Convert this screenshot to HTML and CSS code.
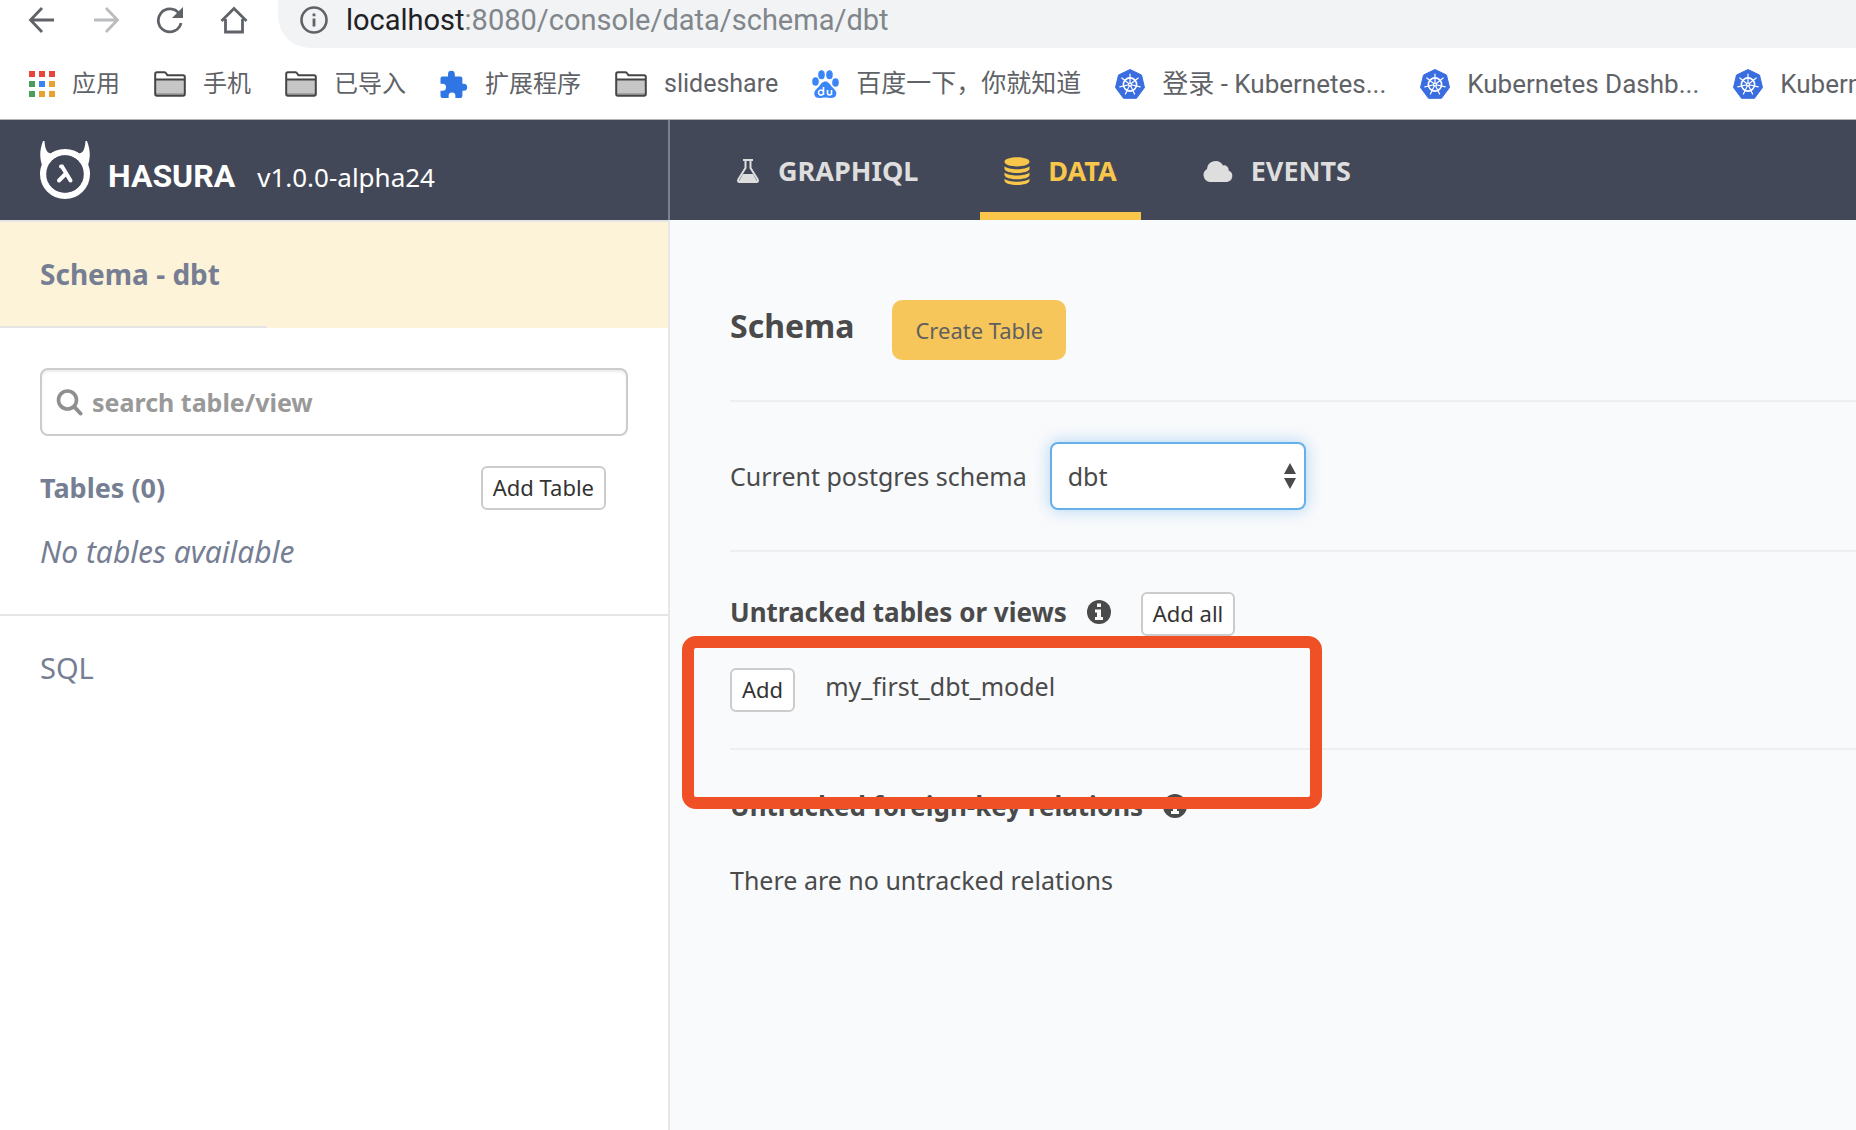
FILE: index.html
```html
<!DOCTYPE html>
<html lang="zh-CN">
<head>
<meta charset="utf-8">
<title>Schema - dbt | Hasura</title>
<meta name="viewport" content="width=device-width, initial-scale=1">
<link rel="stylesheet" href="styles.css">
</head>
<body>
<svg class="sprite" aria-hidden="true">
  <symbol id="folder" viewBox="0 0 32 26">
    <path d="M1.2 3q0-1.8 1.8-1.8h7.2q1 0 1.6.8l1.6 2.2h15.600q1.800 0 1.800 1.800v17q0 1.800-1.800 1.800H3q-1.800 0-1.800-1.800z" fill="#fff"/>
    <path d="M2 9h28v15H2z" fill="#c6c6c6"/><path d="M2 22h28v2H2z" fill="#a3a3a3"/>
    <path d="M1.200 3q0-1.800 1.800-1.800h7.200q1 0 1.600.8l1.600 2.200h15.600q1.800 0 1.800 1.800v17q0 1.800-1.800 1.800H3q-1.800 0-1.800-1.800zM1 8.600h30" fill="none" stroke="#454545" stroke-width="2"/>
  </symbol>
  <symbol id="kube" viewBox="0 0 30 30">
    <path d="M15 0.500 26.500 6 29.500 18.500 21.500 29.300H8.500L.5 18.500 3.500 6z" fill="#3a6de0" stroke="#3a6de0" stroke-linejoin="round"/>
    <g fill="none" stroke="#fff" stroke-linecap="round"><circle cx="15" cy="15.500" r="6.600" stroke-width="1.600"/>
    <path stroke-width="1.200" d="M15 15.500V5M15 15.500l8.200-6.500M15 15.500l10.200 2.300M15 15.500l4.600 9.500M15 15.500l-4.600 9.500M15 15.500l-10.200 2.300M15 15.500 6.800 9"/></g>
    <circle cx="15" cy="15.500" r="2" fill="#fff"/><circle cx="15" cy="15.500" r=".8" fill="#3a6de0"/>
  </symbol>
  <symbol id="info" viewBox="0 0 24 24">
    <circle cx="12" cy="12" r="12" fill="#4a4a4a"/>
    <path d="M10 3.500h4v3.500h-4zM8 9.500h6v7.500h2v3H8v-3h2v-4.500H8z" fill="#f9fafc"/>
  </symbol>
</svg>

<header class="browser">
  <div class="toolbar">
    <button class="tool" aria-label="Back"><svg width="28" height="28" viewBox="0 0 28 28"><path d="M26 14H3M14 2 2.500 14 14 26" fill="none" stroke="#5f6368" stroke-width="2.800"/></svg></button>
    <button class="tool" aria-label="Forward"><svg width="28" height="28" viewBox="0 0 28 28"><path d="M2 14h23M14 2l11.500 12L14 26" fill="none" stroke="#babcbe" stroke-width="2.800"/></svg></button>
    <button class="tool" aria-label="Reload"><svg width="28" height="28" viewBox="0 0 28 28"><path d="M23 7.500A11.500 11.500 0 1 0 25 17" fill="none" stroke="#5f6368" stroke-width="2.800"/><path d="M27 1v11H16z" fill="#5f6368"/></svg></button>
    <button class="tool" aria-label="Home"><svg width="28" height="28" viewBox="0 0 28 28"><path d="M1.500 15 14 2.500 26.500 15M5.500 13v13h17V13" fill="none" stroke="#5f6368" stroke-width="2.800"/></svg></button>
    <div class="address">
      <svg width="28" height="28" viewBox="0 0 28 28"><circle cx="14" cy="14" r="12.500" fill="none" stroke="#5f6368" stroke-width="2.600"/><path d="M12.600 7.500h2.800v2.800h-2.800zM12.600 12.500h2.800v8h-2.800z" fill="#5f6368"/></svg>
      <span class="url"><b>localhost</b>:8080/console/data/schema/dbt</span>
    </div>
  </div>
  <nav class="bookmarks" aria-label="Bookmarks">
    <a href="#"><svg width="26" height="26" viewBox="0 0 26 26"><path d="M0 0h6v6H0zM10 0h6v6h-6zM20 0h6v6h-6z" fill="#e8453c"/><path d="M0 10h6v6H0zM0 20h6v6H0z" fill="#4a9d5b"/><path d="M10 10h6v6h-6z" fill="#3b83f1"/><path d="M20 10h6v6h-6zM10 20h6v6h-6zM20 20h6v6h-6z" fill="#e8a234"/></svg>应用</a>
    <a href="#"><svg width="32" height="26"><use href="#folder"/></svg>手机</a>
    <a href="#"><svg width="32" height="26"><use href="#folder"/></svg>已导入</a>
    <a href="#"><svg width="28" height="28" viewBox="0 0 28 28"><path d="M2.500 6.500H8V4.200a3.400 3.400 0 0 1 6.800 0V6.500h5.600q2 0 2 2v5.300h1.300a3.500 3.500 0 0 1 0 7h-1.300V26q0 2-2 2h-5v-2a3.400 3.400 0 0 0-6.800 0v2H2.500q-2 0-2-2v-5.200h2a3.500 3.500 0 0 0 0-7h-2V8.500q0-2 2-2z" fill="#2f75e4"/></svg>扩展程序</a>
    <a href="#" class="page"><svg width="32" height="26"><use href="#folder"/></svg>slideshare</a>
    <a href="#" class="page"><svg width="27" height="28" viewBox="0 0 27 28"><g fill="#3b86f7"><ellipse cx="3.500" cy="11.500" rx="3.300" ry="4.300"/><ellipse cx="9.500" cy="4.800" rx="3.300" ry="4.500"/><ellipse cx="17.500" cy="4.800" rx="3.300" ry="4.500"/><ellipse cx="23.500" cy="12.500" rx="3.300" ry="4.300"/><path d="M13.300 11.500c3 0 4.500 2.500 6 4.500 2 2.500 5.400 4.500 5 8-.4 3-2.800 4-5.300 4-2 0-3.500-.6-5.700-.6s-3.700.6-5.700.6c-3 0-5-1-5.300-4-.3-3.500 3-5.500 5-8 1.500-2 3-4.500 6-4.500z"/></g><path d="M11.500 17v8M11.500 22.500a2.500 2.500 0 1 0 0 .1M15.500 20v3q0 2 2 2t2-2v-3V25" fill="none" stroke="#fff" stroke-width="1.600"/></svg>百度一下，你就知道</a>
    <a href="#" class="cluster"><svg width="30" height="30"><use href="#kube"/></svg>登录 - Kubernetes...</a>
    <a href="#" class="cluster"><svg width="30" height="30"><use href="#kube"/></svg>Kubernetes Dashb...</a>
    <a href="#" class="cluster"><svg width="30" height="30"><use href="#kube"/></svg>Kubernetes</a>
  </nav>
</header>

<div class="topbar">
  <div class="brand">
    <svg width="50" height="58" viewBox="0 0 50 58"><circle cx="25" cy="33" r="21.800" fill="none" stroke="#fff" stroke-width="6.400"/><path d="M3 0C-1 10 0 18 2 24L0 33 6 38 13 16 22 10C16 9 13 11 11 12.500 6 12 5 6 4.500 0zM47 0c4 10 3 18 1 24l2 9-6 5-7-22-9-6c6-1 9 1 11 2.500 5-.5 6-6.500 6.500-12.500z" fill="#fff"/><circle cx="25" cy="33" r="18.800" fill="#434858"/><path d="M21 25.500h1L30.500 39.500M25.500 33l-6.500 6.500" fill="none" stroke="#fff" stroke-width="4" stroke-linecap="round"/></svg>
    <span class="wordmark">HASURA</span>
    <span class="version">v1.0.0-alpha24</span>
  </div>
  <nav class="tabs" aria-label="Console">
    <a class="tab" href="#"><svg width="24" height="24" viewBox="0 0 24 24"><path d="M7 1h10M9.500 1v8L2.300 20.500q-1 2.500 1.500 2.500h16.400q2.500 0 1.500-2.500L14.500 9V1" fill="none" stroke="#dedede" stroke-width="2"/><path d="M7 15h10l4.500 8h-19z" fill="#dedede"/></svg>GRAPHIQL</a>
    <a class="tab active" href="#"><svg width="26" height="28" viewBox="0 0 26 28"><path d="M.5 4.800C.5-1.400 25.500-1.400 25.500 4.800S.5 11 .5 4.800zM.5 9.300c4 4 21 4 25 0v2.500c0 5.600-25 5.600-25 0zM.5 15.500c4 4 21 4 25 0V18c0 5.600-25 5.600-25 0zM.5 21.700c4 4 21 4 25 0v1.800c0 6-25 6-25 0z" fill="#f8c64a"/></svg>DATA</a>
    <a class="tab" href="#"><svg width="30" height="22" viewBox="0 0 30 22"><path d="M7 22a7 7 0 0 1-3-13A8.500 8.500 0 0 1 20 5.500a4.500 4.500 0 0 1 5.600 5A6 6 0 0 1 24 22z" fill="#dedede"/></svg>EVENTS</a>
  </nav>
</div>

<div class="content">
  <aside class="sidebar">
    <a class="current" href="#"><span>Schema - dbt</span></a>
    <div class="tables">
      <label class="search"><svg width="28" height="28" viewBox="0 0 28 28"><circle cx="11.500" cy="12" r="9" fill="none" stroke="#8f8f8f" stroke-width="3.600"/><path d="m18.500 19 6 6.500" stroke="#8f8f8f" stroke-width="4" stroke-linecap="round"/></svg><input type="text" placeholder="search table/view" aria-label="search table/view"></label>
      <div class="tables-head"><h2>Tables (0)</h2><button class="btn">Add Table</button></div>
      <p class="empty">No tables available</p>
    </div>
    <a class="sql" href="#">SQL</a>
  </aside>

  <main class="main">
    <section class="title-row"><h1>Schema</h1><button class="btn-primary">Create Table</button></section>
    <section class="schema-row">
      <label for="schema">Current postgres schema</label>
      <span class="select"><select id="schema"><option>dbt</option><option>public</option></select><svg width="12" height="26" viewBox="0 0 12 26"><path d="M6 0l6 11H0zM6 26l6-11H0z" fill="#4a4a4a"/></svg></span>
    </section>
    <section class="untracked">
      <div class="section-head"><h2>Untracked tables or views<svg width="24" height="24"><use href="#info"/></svg></h2><button class="btn">Add all</button></div>
      <div class="model"><button class="btn">Add</button><span>my_first_dbt_model</span></div>
    </section>
    <section class="relations">
      <div class="section-head"><h2>Untracked foreign-key relations<svg width="24" height="24"><use href="#info"/></svg></h2></div>
      <p>There are no untracked relations</p>
    </section>
    <div class="highlight"></div>
  </main>
</div>
</body>
</html>
```
FILE: styles.css
```css
* { box-sizing: border-box; }

body {
  margin: 0;
  min-height: 100vh;
  display: flex;
  flex-direction: column;
  overflow-x: hidden;
  background: #fff;
  color: #4a4a4a;
  font: 25px/36px "Noto Sans", sans-serif;
}

h1, h2, p { margin: 0; }
a { color: inherit; text-decoration: none; }
button, input, select { font: inherit; color: inherit; }
svg { flex: none; display: block; }
.sprite { position: absolute; width: 0; height: 0; }

/* Browser chrome */
.browser {
  height: 120px;
  overflow: hidden;
  border-bottom: 1px solid #b3b3b5;
  font-family: Roboto, "Noto Sans CJK SC", sans-serif;
  color: #5f6368;
}
.toolbar { display: flex; height: 48px; padding-left: 28px; gap: 36px; }
.tool { flex: none; height: 40px; padding: 0; border: 0; background: none; }
.address {
  flex: 1;
  display: flex;
  align-items: center;
  gap: 18px;
  padding: 0 22px 8px;
  margin-left: -6px;
  border-bottom-left-radius: 32px;
  background: #f1f3f4;
  font-size: 29px;
  color: #80868b;
}
.url b { font-weight: 400; color: #202124; }
.bookmarks {
  display: flex;
  align-items: center;
  gap: 34px;
  height: 72px;
  padding-left: 29px;
  font-size: 24px;
  white-space: nowrap;
}
.bookmarks a { flex: none; display: flex; align-items: center; gap: 17px; }
.bookmarks .page { font-size: 25px; }
.bookmarks .cluster { font-size: 26px; }

/* Console header */
.topbar { display: flex; height: 100px; background: #434858; color: #dedede; }
.brand {
  width: 36.1%;
  display: flex;
  align-items: center;
  padding-left: 40px;
  border-right: 2px solid #788095;
  color: #fff;
}
.wordmark { margin: 12px 22px 0 18px; font: 700 32px/40px Roboto, sans-serif; }
.version { margin-top: 14px; font-size: 26px; }
.tabs { display: flex; padding-left: 42px; gap: 38px; }
.tab {
  display: flex;
  align-items: center;
  gap: 18px;
  padding: 10px 24px 0;
  border-bottom: 8px solid transparent;
  font-size: 27px;
  font-weight: 700;
}
.tab.active { color: #f8c64a; border-color: #f8c64a; }

/* Sidebar */
.content { flex: 1; display: flex; }
.sidebar {
  width: 36.1%;
  border-top: 2px solid #e5e5e5;
  border-right: 2px solid #e5e7ea;
  color: #767e93;
}
.current { display: block; background: #fdf3d8; font-size: 28px; font-weight: 700; }
.current span {
  display: block;
  width: 40%;
  padding: 34px 0 34px 40px;
  border-bottom: 2px solid #e5e5e5;
  white-space: nowrap;
}
.tables { padding: 40px 40px 44px; border-bottom: 2px solid #e5e5e5; }
.search {
  display: flex;
  align-items: center;
  gap: 8px;
  height: 68px;
  padding: 0 14px;
  border: 2px solid #ccc;
  border-radius: 8px;
  box-shadow: inset 0 2px 2px rgba(0, 0, 0, .075);
}
.search input { flex: 1; min-width: 0; padding: 0; border: 0; outline: 0; background: none; font-weight: 700; }
.search input::placeholder { color: #999; opacity: 1; }
.tables-head { display: flex; justify-content: space-between; padding: 30px 22px 24px 0; }
.tables-head h2 { font-size: 27px; }
.empty { font-size: 30px; font-style: italic; }
.sql { display: block; padding: 34px 40px; font-size: 29px; }

/* Main panel */
.main { flex: 1; position: relative; min-width: 0; padding: 80px 0 60px 60px; background: #f9fafc; }
.title-row, .schema-row, .untracked { border-bottom: 2px solid #eeeff1; }
.title-row { display: flex; gap: 38px; padding-bottom: 40px; }
h1 { font-size: 32px; line-height: 52px; font-weight: 700; }
h2 { display: flex; align-items: center; gap: 20px; font-size: 26px; line-height: 40px; font-weight: 700; }
.btn-primary {
  height: 60px;
  padding: 0 23px;
  border: 0;
  border-radius: 10px;
  background: #f6c65a;
  color: #606060;
  font-size: 22px;
}
.btn {
  height: 44px;
  padding: 0 10px 2px;
  border: 2px solid #ccc;
  border-radius: 6px;
  background: #fff;
  color: #333;
  font-size: 22px;
  line-height: 36px;
}
.schema-row { display: flex; align-items: center; gap: 23px; padding: 40px 0; }
.select { position: relative; width: 256px; }
.select select {
  display: block;
  width: 100%;
  height: 68px;
  padding: 0 16px;
  appearance: none;
  border: 2px solid #66afe9;
  border-radius: 8px;
  outline: 0;
  background: #fff;
  box-shadow: 0 0 16px rgba(102, 175, 233, .5);
}
.select svg { position: absolute; right: 10px; top: 21px; pointer-events: none; }
.untracked { padding: 40px 0 36px; }
.section-head { display: flex; align-items: flex-start; gap: 30px; }
.model { display: flex; align-items: flex-start; gap: 30px; margin-top: 32px; }
.relations { padding-top: 36px; }
.relations p { margin-top: 36px; }
.highlight {
  position: absolute;
  left: 12px;
  top: 416px;
  width: 640px;
  height: 173px;
  border: 12px solid #f05025;
  border-radius: 14px;
  pointer-events: none;
}
```
